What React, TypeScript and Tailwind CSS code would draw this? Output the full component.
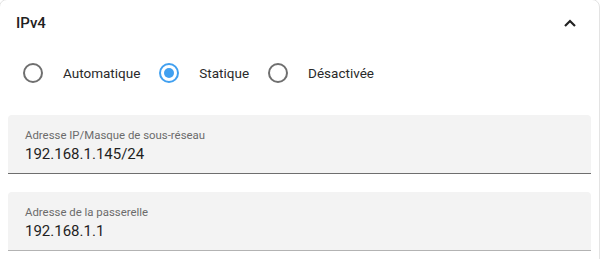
import React, { useState } from "react";

type Mode = "auto" | "static" | "off";

const options: { key: Mode; label: string }[] = [
  { key: "auto", label: "Automatique" },
  { key: "static", label: "Statique" },
  { key: "off", label: "Désactivée" },
];

function Radio({ checked }: { checked: boolean }) {
  return (
    <span
      className={
        "flex h-5 w-5 items-center justify-center rounded-full border-2 " +
        (checked ? "border-[#41a0f0]" : "border-[#6f6f6f]")
      }
    >
      {checked && <span className="h-2.5 w-2.5 rounded-full bg-[#41a0f0]" />}
    </span>
  );
}

function FilledField({ label, value, muted }: { label: string; value: string; muted?: boolean }) {
  return (
    <div
      className={
        "flex h-[59px] flex-col justify-center rounded-t bg-[#f3f3f3] px-[17px] pt-[3px] border-b " +
        (muted ? "border-[#b3b3b3]" : "border-[#6e6e6e]")
      }
    >
      <span className="text-[11.4px] leading-[16px] text-[#6b6b6b]">{label}</span>
      <span className="text-[15px] leading-[22px] text-[#1f1f1f]">{value}</span>
    </div>
  );
}

export default function App() {
  const [mode, setMode] = useState<Mode>("static");

  return (
    <div className="h-[259px] w-[600px] overflow-hidden bg-white font-['Roboto',sans-serif]">
      <div className="-ml-px -mt-px w-[601px] rounded-lg border border-[#e3e3e3] bg-white">
        {/* header */}
        <div className="flex h-[46px] items-center justify-between pl-[16px] pr-[23px]">
          <span className="text-[15px] font-medium text-[#212121]">IPv4</span>
          <svg width="12" height="8" viewBox="0 0 12 8" className="text-[#222]">
            <path d="M1 7l5-5 5 5" fill="none" stroke="currentColor" strokeWidth="2.2" />
          </svg>
        </div>

        {/* mode radios */}
        <div className="flex h-[53px] items-center pl-[23px] pt-px">
          {options.map((o) => (
            <button
              key={o.key}
              type="button"
              onClick={() => setMode(o.key)}
              className="mr-[19px] flex items-center gap-[20px]"
            >
              <Radio checked={mode === o.key} />
              <span className="text-[13.5px] text-[#2a2a2a]">{o.label}</span>
            </button>
          ))}
        </div>

        <div className="flex flex-col gap-[18px] px-[8px] pt-[16px]">
          <FilledField label="Adresse IP/Masque de sous-réseau" value="192.168.1.145/24" />
          <FilledField label="Adresse de la passerelle" value="192.168.1.1" muted />
        </div>
        <div className="h-[20px]" />
      </div>
    </div>
  );
}
